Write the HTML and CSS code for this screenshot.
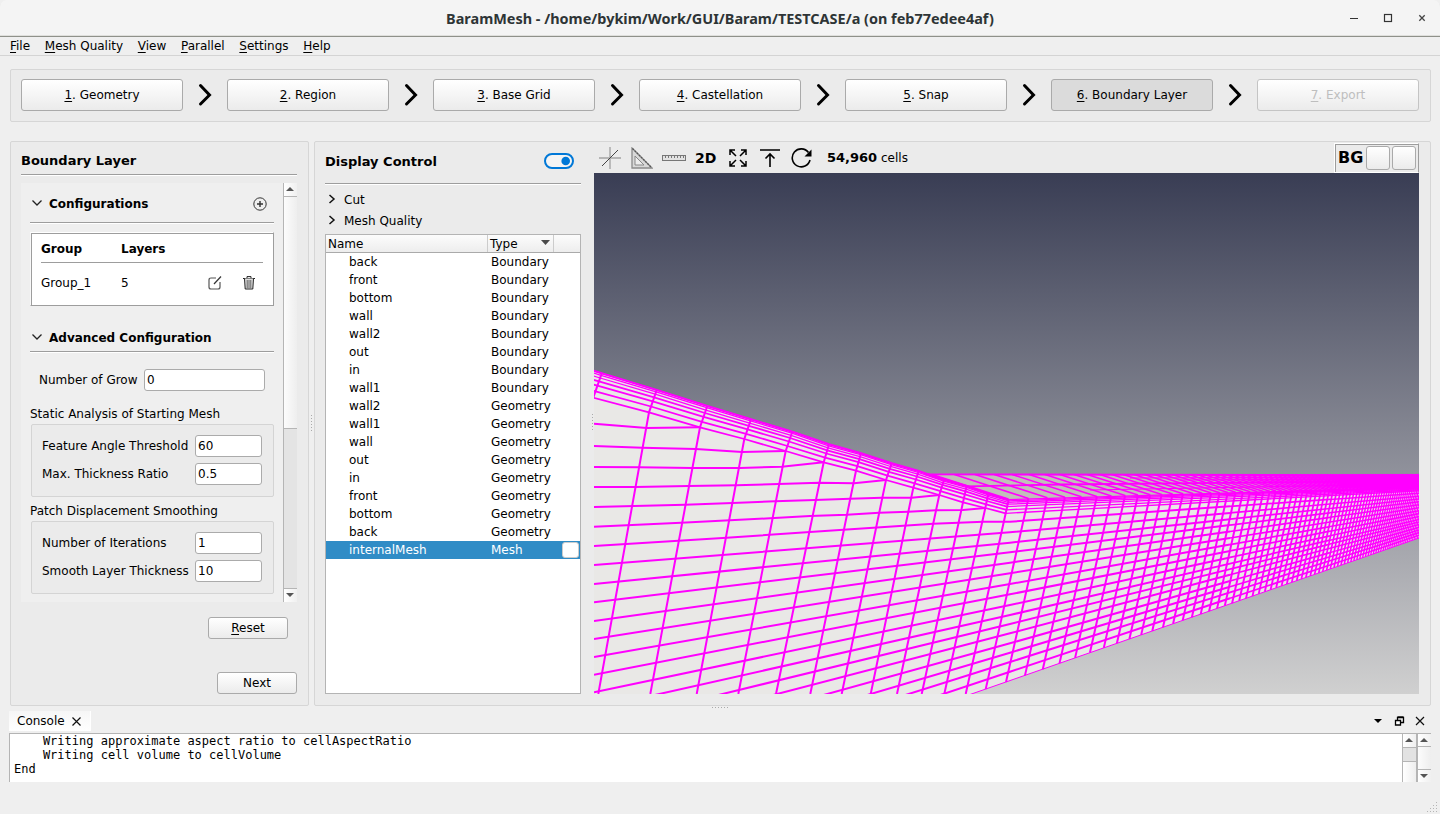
FILE: index.html
```html
<!DOCTYPE html>
<html lang="en">
<head>
<meta charset="utf-8">
<title>BaramMesh</title>
<link rel="stylesheet" href="styles.css">
</head>
<body>
<div class="window">
  <header class="titlebar">
    <h1 class="title">BaramMesh - /home/bykim/Work/GUI/Baram/TESTCASE/a (on feb77edee4af)</h1>
    <svg class="win-buttons" width="80" height="16" viewBox="0 0 80 16"><path d="M4 8.500h8" stroke="#333" fill="none"/><rect x="38.500" y="4.500" width="7" height="7" fill="none" stroke="#333" stroke-width="1.200"/><path d="M73.300 5.300l5.400 5.400M78.700 5.300l-5.400 5.400" stroke="#444" stroke-width="1.300"/></svg>
  </header>
  <nav class="menubar">
    <span><u>F</u>ile</span><span><u>M</u>esh Quality</span><span><u>V</u>iew</span><span><u>P</u>arallel</span><span><u>S</u>ettings</span><span><u>H</u>elp</span>
  </nav>
  <section class="steps">
    <button class="btn step"><u>1</u>. Geometry</button>
    <svg class="chev" width="44" height="32"><path d="M17.500 6.500l9 9.500l-9 9"/></svg>
    <button class="btn step"><u>2</u>. Region</button>
    <svg class="chev" width="44" height="32"><path d="M17.500 6.500l9 9.500l-9 9"/></svg>
    <button class="btn step"><u>3</u>. Base Grid</button>
    <svg class="chev" width="44" height="32"><path d="M17.500 6.500l9 9.500l-9 9"/></svg>
    <button class="btn step"><u>4</u>. Castellation</button>
    <svg class="chev" width="44" height="32"><path d="M17.500 6.500l9 9.500l-9 9"/></svg>
    <button class="btn step"><u>5</u>. Snap</button>
    <svg class="chev" width="44" height="32"><path d="M17.500 6.500l9 9.500l-9 9"/></svg>
    <button class="btn step active"><u>6</u>. Boundary Layer</button>
    <svg class="chev" width="44" height="32"><path d="M17.500 6.500l9 9.500l-9 9"/></svg>
    <button class="btn step off"><u>7</u>. Export</button>
  </section>

  <main class="main">
    <section class="panel settings">
      <h2 class="heading">Boundary Layer</h2>
      <div class="scroll">
        <div class="scroll-body">
          <div class="section-title">
            <svg width="12" height="8" viewBox="0 0 12 8"><path d="M1.500 1.500l4.500 4.500l4.500-4.500" fill="none" stroke="#222" stroke-width="1.300"/></svg>
            <b>Configurations</b>
            <svg class="add" width="14" height="14" viewBox="0 0 14 14"><circle cx="7" cy="7" r="6.200" fill="none" stroke="#333" stroke-width="1"/><path d="M7 4v6M4 7h6" stroke="#333" stroke-width="1.400"/></svg>
          </div>
          <div class="groups">
            <div class="groups-head"><b>Group</b><b>Layers</b></div>
            <div class="groups-row"><span>Group_1</span><span>5</span>
              <svg class="edit" width="14" height="14" viewBox="0 0 14 14"><path d="M8 2H3Q1 2 1 4v7q0 2 2 2h7q2 0 2-2V6" fill="none" stroke="#555" stroke-width="1.200"/><path d="M6 8l7-7.500" stroke="#333" stroke-width="1.200"/></svg>
              <svg class="trash" width="12" height="14" viewBox="0 0 12 14"><path d="M0 2.500h12M4 2V.6h4V2" fill="none" stroke="#222"/><path d="M1.500 2.500l.7 10.500h7.600l.7-10.500" fill="#ddd" stroke="#222"/><path d="M4.200 4v8M6 4v8M7.800 4v8" stroke="#444" stroke-width=".8"/></svg>
            </div>
          </div>
          <div class="section-title second">
            <svg width="12" height="8" viewBox="0 0 12 8"><path d="M1.500 1.500l4.500 4.500l4.500-4.500" fill="none" stroke="#222" stroke-width="1.300"/></svg>
            <b>Advanced Configuration</b>
          </div>
          <div class="field grow"><label>Number of Grow</label><div class="input">0</div></div>
          <div class="caption">Static Analysis of Starting Mesh</div>
          <div class="groupbox">
            <div class="field"><label>Feature Angle Threshold</label><div class="input">60</div></div>
            <div class="field"><label>Max. Thickness Ratio</label><div class="input">0.5</div></div>
          </div>
          <div class="caption">Patch Displacement Smoothing</div>
          <div class="groupbox">
            <div class="field"><label>Number of Iterations</label><div class="input">1</div></div>
            <div class="field"><label>Smooth Layer Thickness</label><div class="input">10</div></div>
          </div>
        </div>
        <div class="vbar">
          <div class="vbtn up"></div><div class="thumb"></div><div class="trough"></div><div class="vbtn down"></div>
        </div>
      </div>
      <button class="btn small reset"><u>R</u>eset</button>
      <button class="btn small next">Next</button>
    </section>
    <div class="splitter"></div>
    <section class="panel work">
      <div class="display">
        <div class="display-head"><h2 class="heading">Display Control</h2>
          <svg width="30" height="16" viewBox="0 0 30 16"><rect x="1" y="1" width="28" height="14" rx="7" fill="#f4f4f4" stroke="#0078d7" stroke-width="2"/><circle cx="21.700" cy="8" r="4.300" fill="#0078d7"/></svg>
        </div>
        <div class="fold"><svg width="8" height="10"><path d="M1.500 1l4.500 4l-4.500 4" fill="none" stroke="#111" stroke-width="1.500"/></svg>Cut</div>
        <div class="fold"><svg width="8" height="10"><path d="M1.500 1l4.500 4l-4.500 4" fill="none" stroke="#111" stroke-width="1.500"/></svg>Mesh Quality</div>
        <div class="tree">
          <div class="tree-head"><span>Name</span><span>Type<svg width="9" height="5"><path d="M0 0h9l-4.500 5z" fill="#4a4a4a"/></svg></span><span></span></div>
          <div class="tree-row"><span>back</span><span>Boundary</span></div>
          <div class="tree-row"><span>front</span><span>Boundary</span></div>
          <div class="tree-row"><span>bottom</span><span>Boundary</span></div>
          <div class="tree-row"><span>wall</span><span>Boundary</span></div>
          <div class="tree-row"><span>wall2</span><span>Boundary</span></div>
          <div class="tree-row"><span>out</span><span>Boundary</span></div>
          <div class="tree-row"><span>in</span><span>Boundary</span></div>
          <div class="tree-row"><span>wall1</span><span>Boundary</span></div>
          <div class="tree-row"><span>wall2</span><span>Geometry</span></div>
          <div class="tree-row"><span>wall1</span><span>Geometry</span></div>
          <div class="tree-row"><span>wall</span><span>Geometry</span></div>
          <div class="tree-row"><span>out</span><span>Geometry</span></div>
          <div class="tree-row"><span>in</span><span>Geometry</span></div>
          <div class="tree-row"><span>front</span><span>Geometry</span></div>
          <div class="tree-row"><span>bottom</span><span>Geometry</span></div>
          <div class="tree-row"><span>back</span><span>Geometry</span></div>
          <div class="tree-row selected"><span>internalMesh</span><span>Mesh</span><i class="swatch"></i></div>
        </div>
      </div>
      <div class="splitter inner"></div>
      <div class="view">
        <div class="toolbar">
          <svg width="22" height="22" viewBox="0 0 22 22"><path d="M0 11h22M11 0v22" stroke="#b5b5b5" stroke-width="1.800"/><path d="M3 19L19 3" stroke="#444" stroke-width="1"/></svg>
          <svg width="22" height="22" viewBox="0 0 22 22"><path d="M1 1v20h20z" fill="#d8d8d8" stroke="#8a8a8a" stroke-width="1.300"/><path d="M4 9v9h9z" fill="#ececec" stroke="#888"/><path d="M1.500 1.500l19 19" stroke="#555" stroke-width="1.200" stroke-dasharray="2 1"/></svg>
          <svg class="ruler" width="24" height="6" viewBox="0 0 24 6"><rect x=".5" y=".5" width="23" height="5" fill="#e2e2e2" stroke="#777"/><path d="M3 2h19" stroke="#555" stroke-width="1.500" stroke-dasharray="1 2"/></svg>
          <b class="two-d">2D</b>
          <svg width="18" height="18" viewBox="0 0 18 18"><path d="M7 7L1 1M1 6V1h5M11 7l6-6M12 1h5v5M7 11l-6 6M1 12v5h5M11 11l6 6M12 17h5v-5" fill="none" stroke="#000" stroke-width="1.500"/></svg>
          <svg width="20" height="18" viewBox="0 0 20 18"><path d="M0 1h20M10 18V5M5.500 9.500L10 5l4.500 4.500" fill="none" stroke="#000" stroke-width="1.600"/></svg>
          <svg class="rotate" width="21" height="20" viewBox="0 0 21 20"><path d="M17.500 4.500A9 9 0 1 0 19 12" fill="none" stroke="#000" stroke-width="1.600"/><path d="M20.500 1.500v7H13.500z" fill="#000"/></svg>
          <p class="cells"><b>54,960</b> cells</p>
          <div class="bg-box"><b>BG</b><button class="btn color"></button><button class="btn color"></button></div>
        </div>
        <svg class="scene" id="scene" width="825" height="521" viewBox="594 173 825 521"></svg>
      </div>
    </section>
  </main>
  <div class="hsplitter"></div>

  <footer class="dock">
    <div class="dock-head">
      <div class="tab">Console<svg width="9" height="9"><path d="M.5.5l8 8M8.500.5l-8 8" stroke="#111" stroke-width="1.200"/></svg></div>
      <svg class="dock-icons" width="52" height="12" viewBox="0 0 52 12"><path d="M0 4h8l-4 4z"/><path d="M23.500 5V2.500h6v5H27M23.500 2h6" fill="none" stroke="#000" stroke-width="1.300"/><path d="M21.500 5.500h5v4.500h-5zM21.500 5.500h5" fill="#fff" stroke="#000" stroke-width="1.300"/><path d="M42 2l8 8M50 2l-8 8" stroke="#111" stroke-width="1.200"/></svg>
    </div>
    <div class="console">
      <pre>    Writing approximate aspect ratio to cellAspectRatio
    Writing cell volume to cellVolume
End</pre>
      <div class="vbar log"><div class="vbtn up"></div><div class="trough"></div><div class="rest"></div></div>
      <div class="vbar outer"><div class="vbtn up"></div><div class="thumb"></div><div class="vbtn down"></div></div>
    </div>
    <svg class="grip" width="12" height="12"><path d="M9.500 1v1M9.500 4v1M9.500 7v1M9.500 10v1M6.500 4v1M6.500 7v1M6.500 10v1M3.500 7v1M3.500 10v1M.5 10v1" stroke="#b5b5b5"/></svg>
  </footer>
</div>
<script src="mesh.js"></script>
</body>
</html>
```
FILE: styles.css
```css
* { box-sizing: border-box; }
body { margin: 0; background: #efefef; color: #000; font: 12px/14px "DejaVu Sans", sans-serif; }
u { text-decoration: underline; text-decoration-thickness: 1px; text-underline-offset: 2px; text-decoration-skip-ink: none; }
h1, h2, p, pre { margin: 0; }
svg { display: block; flex: none; }
.window { width: 1440px; height: 814px; overflow: hidden; display: flex; flex-direction: column; background: #efefef; }
.titlebar { height: 37px; flex: none; display: grid; grid-template-columns: 98px 1fr 98px; align-items: center; background: #f4f4f4; border-bottom: 1px solid #8f918a; box-shadow: inset 0 -1px #dfdfdc; border-radius: 7px 7px 0 0; }
.title { grid-column: 2; text-align: center; font: bold 14.450px/18px "Noto Sans", sans-serif; color: #2e3436; white-space: nowrap; padding-top: 1px; }
.win-buttons { margin-left: 4px; }
.menubar { height: 19px; flex: none; display: flex; gap: 14.700px; padding: 2px 10px 0; border-bottom: 1px solid #d4d4d4; }
.btn { font: 12px/14px "DejaVu Sans", sans-serif; color: #000; margin: 0; padding: 0; border: 1px solid #aaa; border-radius: 3px; background: linear-gradient(#fff, #ebebeb); }
.steps { height: 53px; flex: none; margin: 13px 9px 0 10px; padding: 9px 10px 0; border: 1px solid #d6d6d6; border-radius: 2px; background: #ebebeb; display: flex; }
.step { width: 162px; height: 32px; flex: none; }
.active { background: #dbdbdb; }
.off { color: #bebebe; border-color: #c4c4c4; }
.chev path { fill: none; stroke: #000; stroke-width: 3; stroke-linecap: round; stroke-linejoin: miter; }
.main { height: 565px; flex: none; margin: 19px 9px 0 10px; display: flex; }
.panel { border: 1px solid #d6d6d6; border-radius: 2px; background: #ebebeb; }
.settings { width: 299px; padding: 0 11px 0 10px; display: flex; flex-direction: column; }
.heading { font: bold 13px/16px "DejaVu Sans", sans-serif; }
.settings .heading { height: 33px; padding-top: 11px; border-bottom: 1px solid #9d9d9d; box-shadow: 0 1px #fff; flex: none; }
.scroll { margin-top: 8px; height: 419px; flex: none; display: flex; background: #efefef; }
.scroll-body { width: 262px; padding: 0 9px; flex: none; }
.section-title { height: 40px; display: flex; align-items: center; gap: 6px; padding: 2px 7px 0 1px; border-bottom: 1px solid #9d9d9d; box-shadow: 0 1px #fff; }
.add { margin-left: auto; }
.section-title.second { margin-top: 17px; height: 29px; }
.section-title > svg:first-child { margin-top: -2px; }
.groups { margin: 9px 0 0; height: 74px; background: #fff; border: 1px solid #9d9d9d; border-top-color: #fff; border-left-color: #f8f8f8; box-shadow: inset 1px 1px #9d9d9d; padding: 9px 10px; }
.groups-head, .groups-row { display: grid; grid-template-columns: 80px 87px 35px auto; }
.groups-head { height: 21px; border-bottom: 1px solid #9d9d9d; }
.groups-row { padding-top: 13px; }
.field { display: flex; justify-content: space-between; align-items: center; height: 22px; }
.input { width: 68px; height: 22px; line-height: 20px; padding-left: 2px; border: 1px solid #ababab; border-radius: 3px; background: #fff; }
.groupbox .input { width: 67px; }
.grow { margin: 17px 9px 0 9px; }
.grow .input { width: 121px; }
.caption { margin-top: 16px; }
.groupbox { height: 73px; margin: 3px 0 0 1px; border: 1px solid #d4d4d4; border-radius: 2px; background: #ebebeb; padding: 10px 11px 0 10px; }
.groupbox .field + .field { margin-top: 6px; }
.groupbox + .caption { margin-top: 7px; }
.vbar { width: 14px; flex: none; display: flex; flex-direction: column; border-left: 1px solid #b5b5b5; background: #e4e4e4; }
.vbtn { height: 14px; flex: none; background: linear-gradient(90deg, #fff, #f0f0f0); display: flex; align-items: center; justify-content: center; }
.vbtn::after { content: ""; border: 4px solid transparent; margin: 0 1px 1px 0; }
.up { border-bottom: 1px solid #b5b5b5; }
.up::after { border-bottom-color: #555; border-top: 0; }
.down::after { border-top-color: #555; border-bottom: 0; }
.down { border-top: 1px solid #b5b5b5; margin-top: auto; }
.thumb { height: 232px; border-bottom: 1px solid #b5b5b5; background: linear-gradient(90deg, #fcfcfc, #eee); }
.small { width: 80px; height: 22px; flex: none; }
.reset { margin: 15px 9px 0 auto; }
.next { margin: 33px 0 0 auto; }
.splitter { width: 5px; flex: none; background: repeating-linear-gradient(#aaa 0 1px, transparent 1px 3px) center / 1px 17px no-repeat; }
.work { width: 1117px; flex: none; padding: 1px 11px 0 10px; display: flex; }
.display { width: 256px; flex: none; }
.display-head { height: 41px; display: flex; justify-content: space-between; align-items: center; padding: 0 7px 5px 0; border-bottom: 1px solid #9d9d9d; box-shadow: 0 1px #fff; margin-bottom: 8px; }
.display-head .heading { padding-top: 1px; height: 16px; }
.fold { height: 21px; display: flex; gap: 8px; padding: 1px 0 0 3px; }
.fold svg { margin-top: 1px; }
.tree { height: 460px; border: 1px solid #b4b4b4; background: #fff; }
.tree-head { height: 18px; display: grid; grid-template-columns: 161px 66px 1fr; background: linear-gradient(#fcfcfc, #ededed); border-bottom: 1px solid #aaa; }
.tree-head span { padding: 2px 0 0 2px; border-left: 1px solid #ccc; }
.tree-head span:first-child { border: 0; }
.tree-head svg { float: right; margin: 3px 3px 0 0; }
.tree-row { height: 18px; line-height: 18px; display: grid; grid-template-columns: 142px 72px 17px; padding-left: 23px; }
.selected { background: #308cc6; color: #fff; }
.swatch { width: 17px; height: 16px; margin: 1px 0 0 -1px; border: 1px solid #ccc; border-radius: 3px; background: #fff; }
.inner { width: 13px; background-position: 11px 271px; }
.view { width: 826px; }
.toolbar { height: 30px; display: flex; align-items: center; gap: 10px; padding-left: 5px; }
.ruler { margin-left: -1px; }
.two-d { font-size: 14px; margin: 0 2px 0 -1px; width: 22px; }
.toolbar svg:nth-child(5) { margin-right: 3px; }
.rotate { margin-left: 1px; }
.cells { margin-left: 5px; font-size: 12px; white-space: nowrap; }
.cells b { font-size: 13px; }
.bg-box { margin-left: auto; width: 85px; height: 30px; display: flex; align-items: center; gap: 2px; padding-left: 3px; border: 1px solid #9d9d9d; border-color: #fff #9d9d9d #fff #fff; box-shadow: inset 1px 1px #9d9d9d; }
.bg-box b { font-size: 16px; width: 26px; }
.color { width: 24px; height: 24px; flex: none; }
.scene { background: linear-gradient(#393d54, #d0d0d0); }
.hsplitter { height: 5px; flex: none; background: repeating-linear-gradient(90deg, #aaa 0 1px, transparent 1px 3px) center 1px / 17px 1px no-repeat; }
.dock { flex: 1; padding: 0 9px; }
.dock-head { height: 20px; display: flex; justify-content: space-between; align-items: center; }
.tab { width: 82px; height: 20px; padding: 3px 9px 0 8px; display: flex; justify-content: space-between; background: linear-gradient(#f6f6f6, #fff); border-right: 1px solid #fff; }
.tab svg { margin-top: 3px; }
.dock-icons { margin-right: 5px; }
.console { height: 49px; margin-top: 2px; display: flex; background: #fff; border-top: 1px solid #b4b4b4; border-left: 1px solid #b4b4b4; }
.console pre { flex: 1; padding: 0 4px; font: 12px/14px "DejaVu Sans Mono", monospace; }
.log { width: 14px; }
.log .trough { height: 14px; border-bottom: 1px solid #b5b5b5; background: #e2e2e2; }
.rest { flex: 1; background: linear-gradient(90deg, #fff, #eee); }
.outer { border-left: 2px solid #b5b5b5; width: 15px; }
.outer .vbtn { height: 13px; }
.outer .thumb { flex: 1; height: auto; border: 0; }
.grip { margin: 19px -8px 0 auto; }
```
FILE: mesh.js
```js
// Builds the perspective view of the hexahedral mesh in scene coordinates.
const scene = document.getElementById('scene');
const NS = 'http://www.w3.org/2000/svg';
const VP = [1579, 482];
const COLOR = '#ff00ff';

function add(d, attrs) {
  const el = document.createElementNS(NS, 'path');
  el.setAttribute('d', d);
  for (const key in attrs) el.setAttribute(key, attrs[key]);
  scene.appendChild(el);
}
const stroke = (d, width) => add(d, { fill: 'none', stroke: COLOR, 'stroke-width': width });
const line = pts => 'M' + pts.map(p => p[0].toFixed(1) + ' ' + p[1].toFixed(1)).join('L');
const mix = (a, b, t) => [a[0] + (b[0] - a[0]) * t, a[1] + (b[1] - a[1]) * t];
const atX = (a, b, x) => mix(a, b, (x - a[0]) / (b[0] - a[0]));
// Left-hand detail is tabulated in a 3x enlarged frame.
const s = (x, y) => [580 + x / 3, 350 + y / 3];
const bottomY = x => 682 - 0.3486 * (x - 1006);

const outer = [[-10, 46], [65, 70], [230, 120], [382, 168], [513, 208], [637, 245], [747, 283], [843, 310], [935, 340],
  [1016, 363], [1092, 390], [1160, 408], [1225, 431], [1286, 449]].map(p => s(...p));
const inner = [[-130, 100], [40, 143], [207, 187], [360, 232], [493, 267], [617, 303], [731, 337], [828, 362], [918, 390],
  [1000, 413], [1078, 435], [1149, 457], [1216, 474], [1277, 490]].map(p => s(...p));
const feet = [55, 211, 350, 475, 588, 691, 785, 872, 951, 1025, 1093, 1157].map(x => s(x, 1032));

// Front face and the receding upper surface.
add(line([[590, 370], ...outer.slice(1), [1419, 487], [1419, 538], [960, 698], [590, 698]]) + 'Z', { fill: '#e9e8e6' });
add(line([[925, 474], [1419, 475], [1419, 489], outer[13], outer[11]]) + 'Z', { fill: '#c1beb9' });

// Columns
for (let i = 1; i < outer.length; i++) {
  stroke(line(i > 1 ? [outer[i], inner[i], feet[i - 2]] : [outer[i], inner[i]]), 2);
}
for (let k = -1; k < 90; k++) {
  const q = 1 + 0.03427 * k;
  const top = 1047.3 + 18.22 * k / q;
  const foot = 1006 + 19.65 * k / q;
  stroke(line([[top, 499 - 0.0298 * (top - 1008)], [foot, bottomY(foot)]]), Math.max(1, 2 - Math.max(0, k - 16) * 0.018));
}
// Rows that end on the boundary layers
[
  [[42, 221], [200, 234], [360, 232]],
  [[42, 288], [187, 293], [347, 297], [487, 306], [617, 303]],
  [[42, 351], [175, 352], [338, 354], [480, 354], [605, 350], [731, 337]],
  [[42, 411], [167, 411], [325, 408], [470, 406], [595, 402], [718, 398], [822, 400], [918, 390]],
  [[42, 471], [315, 464], [458, 459], [585, 454], [705, 450], [810, 446], [905, 443], [995, 443], [1078, 435]],
  [[42, 530], [303, 518], [450, 511], [570, 505], [690, 498], [800, 494], [898, 488], [985, 485], [1068, 481], [1149, 480], [1216, 474]]
].forEach(row => stroke(line(row.map(p => s(...p))), 2));
// Rows that run through to the vanishing point, thinning with distance
[[588, 515], [645, 547], [702, 578], [757, 607], [813, 638], [867, 670], [921, 702], [974, 733], [1027, 765], [1076, 795],
  [1126, 822], [1175, 850], [1226, 880], [1278, 908], [1330, 936], [1382, 965]
].forEach(([a, b], i) => {
  const pts = [s(42, a)];
  if (i === 0) pts.push(s(440, 563), s(790, 539), s(1060, 521), s(1210, 515));
  const knee = s(1290, b);
  const far = atX(knee, VP, 1230);
  const farther = atX(knee, VP, 1330);
  stroke(line([...pts, knee, far]), 2);
  stroke(line([far, farther]), 1.7);
  stroke(line([farther, VP]), 1.5);
});

// Boundary layers
[0, 0.08, 0.19, 0.33, 0.51, 0.74, 1].forEach(t => {
  const pts = outer.map((p, i) => mix(p, inner[i], t));
  stroke(line(pts), t > 0.3 ? 1.8 : 1.3);
  stroke(line([pts[13], VP]), 1.3);
});
stroke(line(outer), 2);
stroke(line([[960, bottomY(960)], [1419, bottomY(1419)]]), 1);

// Upper surface
stroke(line([[925, 474.3], [1419, 475.3]]) + line([[966, 486.3], [1060, 484.5], [1419, 481]]), 1.8);
for (let k = -2; k < 110; k++) {
  const q = 1 + 0.03427 * k;
  const x = 1047.3 + 18.22 * k / q;
  const y = 499 - 0.0298 * (x - 1008);
  stroke(line([[x, y], [x - (y - 474.5) * 3.1, 474.5]]), 1.6);
}
stroke(line([[944, 480], [925, 474]]) + line([outer[11], [928, 474]]), 1.6);
stroke('M1130 478L1419 477M1090 490L1419 484M1180 480L1419 479', 1.2);
add('M1340 475L1419 475V487L1340 488Z', { fill: COLOR });
```
